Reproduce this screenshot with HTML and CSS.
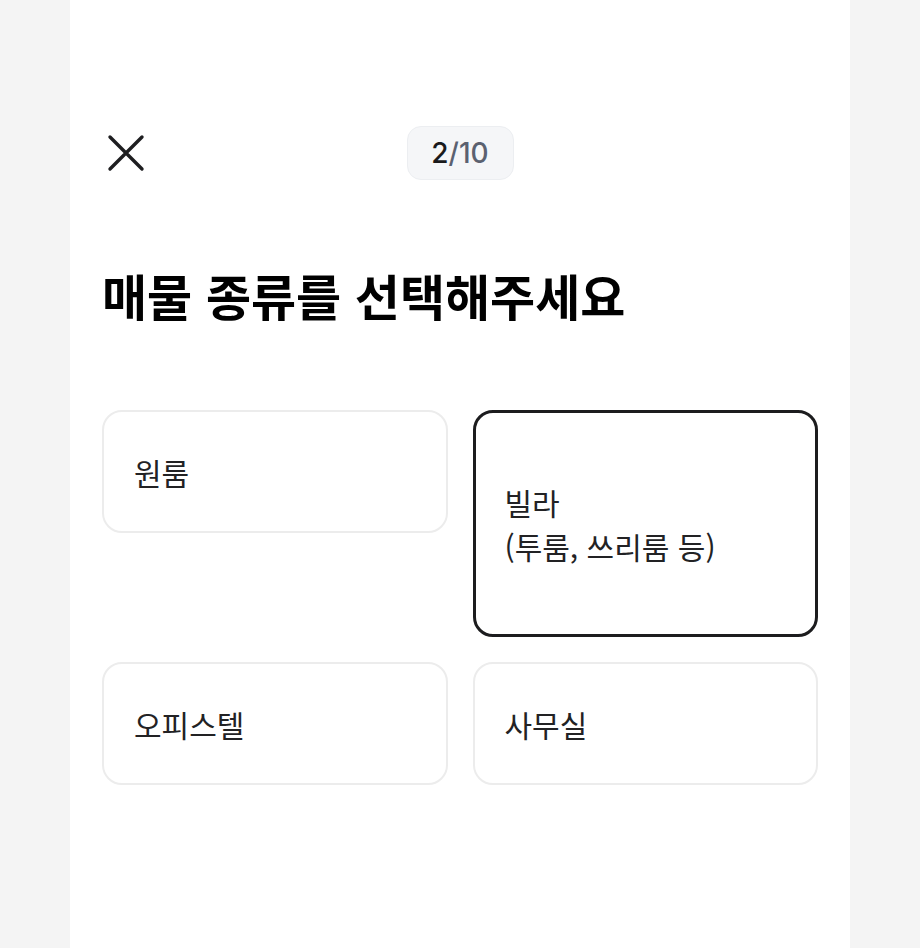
FILE: index.html
```html
<!DOCTYPE html>
<html lang="ko">
<head>
<meta charset="utf-8">
<title>매물 종류</title>
<link rel="stylesheet" href="styles.css">
</head>
<body>
<main class="page">
  <header class="top">
    <button class="close" aria-label="닫기">
      <svg width="38" height="38" viewBox="0 0 38 38"><path d="M3 3 L35 35 M35 3 L3 35" stroke="#1e1e20" stroke-width="3.4" stroke-linecap="round" fill="none"/></svg>
    </button>
    <div class="counter"><span class="cur">2</span><span class="total">/10</span></div>
    <div></div>
  </header>
  <h1 class="title">매물 종류를 선택해주세요</h1>
  <div class="options">
    <div class="option">원룸</div>
    <div class="option selected">빌라<br>(투룸, 쓰리룸 등)</div>
    <div class="option">오피스텔</div>
    <div class="option">사무실</div>
  </div>
</main>
</body>
</html>
```
FILE: styles.css
```css
html, body {
  margin: 0;
  padding: 0;
}
body {
  background: #f4f4f4;
  font-family: Inter, "Noto Sans CJK KR", sans-serif;
  color: #222224;
}
.page {
  box-sizing: border-box;
  width: 780px;
  min-height: 948px;
  margin: 0 auto;
  background: #fff;
  padding: 126px 32px 0;
}
.top {
  display: grid;
  grid-template-columns: 1fr auto 1fr;
  align-items: center;
}
.close {
  justify-self: start;
  background: none;
  border: 0;
  padding: 0;
  margin-left: 5px;
  width: 38px;
  height: 38px;
  display: flex;
}
.counter {
  box-sizing: border-box;
  height: 54px;
  width: 107px;
  display: flex;
  align-items: center;
  justify-content: center;
  background: #f5f6f8;
  border: 1.5px solid #eceef1;
  border-radius: 14px;
  font-size: 28px;
  font-weight: 500;
}
.cur { color: #1a1a1c; }
.total { color: #5b6170; }
.title {
  margin: 81px 0 0;
  font-family: "Noto Sans CJK KR", sans-serif;
  font-size: 49px;
  font-weight: 700;
  line-height: 67px;
  color: #000;
}
.options {
  margin-top: 82px;
  display: grid;
  grid-template-columns: 1fr 1fr;
  gap: 25px 25px;
  align-items: start;
}
.option {
  box-sizing: border-box;
  border: 2px solid #ececec;
  border-radius: 20px;
  padding: 0 30px;
  height: 123px;
  display: flex;
  align-items: center;
  font-family: "Noto Sans CJK KR", sans-serif;
  font-size: 30px;
  line-height: 44px;
  color: #222224;
}
.option.selected {
  border: 3px solid #1c1c1e;
  padding: 0 29px;
  height: 227px;
}
```
